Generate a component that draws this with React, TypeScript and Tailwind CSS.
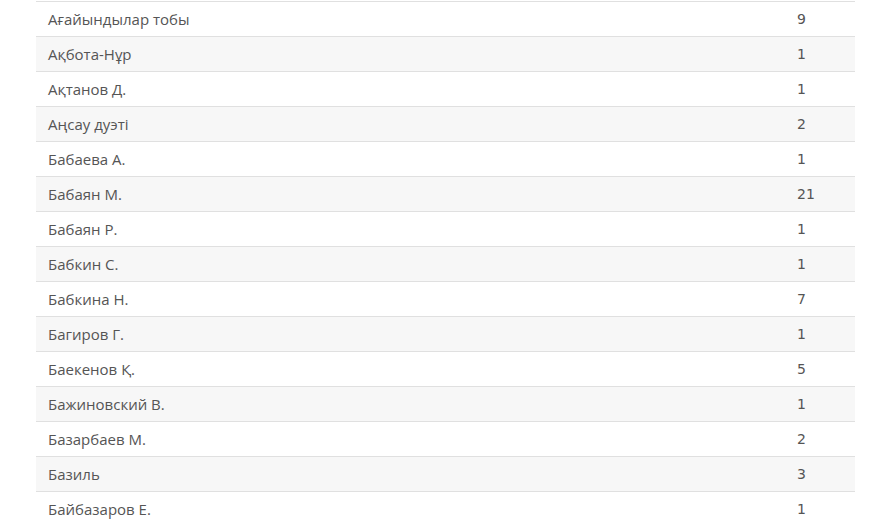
import React from "react";

const rows: [string, number][] = [
  ["Ағайындылар тобы", 9],
  ["Ақбота-Нұр", 1],
  ["Ақтанов Д.", 1],
  ["Аңсау дуэті", 2],
  ["Бабаева А.", 1],
  ["Бабаян М.", 21],
  ["Бабаян Р.", 1],
  ["Бабкин С.", 1],
  ["Бабкина Н.", 7],
  ["Багиров Г.", 1],
  ["Баекенов Қ.", 5],
  ["Бажиновский В.", 1],
  ["Базарбаев М.", 2],
  ["Базиль", 3],
  ["Байбазаров Е.", 1],
];

export default function App() {
  return (
    <div className="w-[895px] h-[524px] overflow-hidden bg-white pt-[1px]">
      <div className="ml-[36px] w-[819px]">
        {rows.map(([name, n], i) => (
          <div
            key={name}
            className={`grid grid-cols-[749px_70px] h-[35px] items-center border-t border-[#e0e0e0] ${
              i % 2 === 1 ? "bg-[#f7f7f7]" : "bg-white"
            }`}
          >
            <div className="pl-[12px] text-[15px] text-[#555555] font-['Open_Sans',sans-serif]">
              {name}
            </div>
            <div className="pl-[12px] text-[14px] text-[#555555] font-['DejaVu_Sans',sans-serif]">
              {n}
            </div>
          </div>
        ))}
      </div>
    </div>
  );
}
